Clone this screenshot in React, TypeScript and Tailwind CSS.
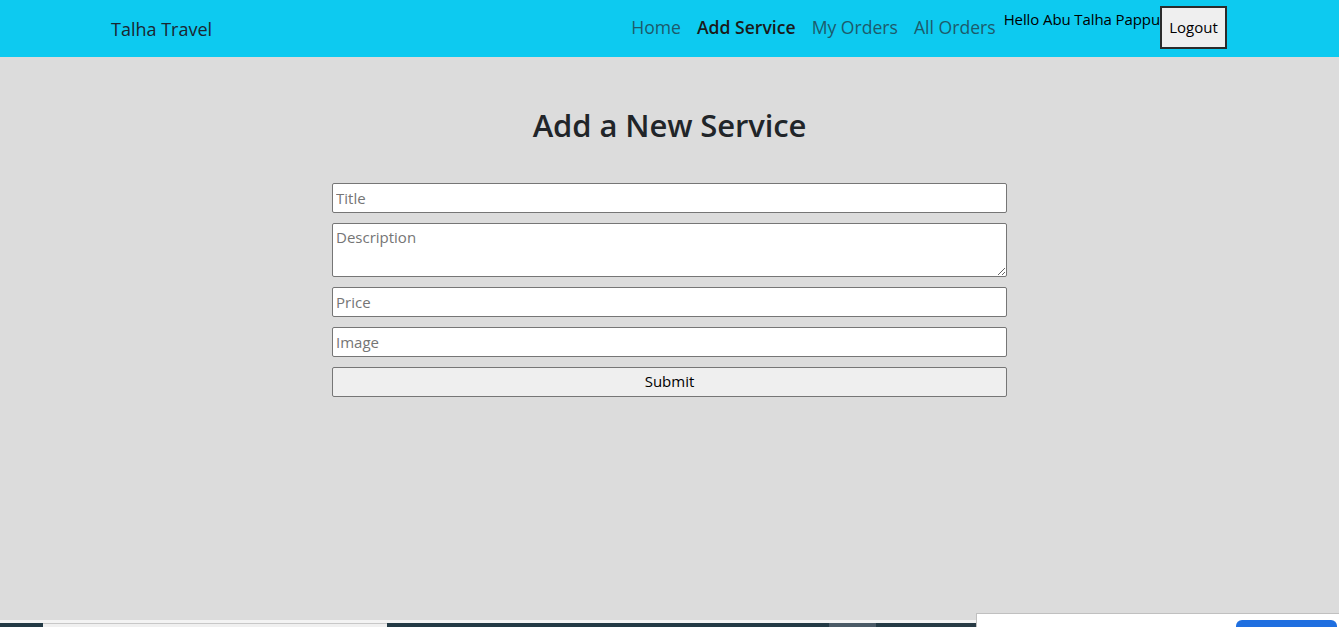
const NavLink = ({ label, active }: { label: string; active?: boolean }) => {
  return (
    <a
      href="#"
      className={
        "px-2 text-[17.6px] " + (active ? "text-[#1a1a1a] font-semibold" : "text-[#1d5a6b]")
      }
    >
      {label}
    </a>
  );
};

const Field = ({ placeholder }: { placeholder: string }) => {
  return (
    <input
      placeholder={placeholder}
      className="h-[30px] w-full bg-white border border-[#767676] rounded-[2px] px-[3px] text-[15px] text-black placeholder:text-[#757575] outline-none"
    />
  );
};

export default function App() {
  return (
    <div
      className="relative h-[627px] w-full flex flex-col bg-[#dcdcdc] overflow-hidden"
      style={{ fontFamily: '"Open Sans", "Noto Sans", sans-serif' }}
    >
      <nav className="h-[57px] shrink-0 bg-[#0dcaf0] flex items-center justify-between pl-[111px] pr-[112px]">
        <a href="#" className="text-[18px] text-[#1b2630] mt-[1px]">
          Talha Travel
        </a>
        <div className="flex items-center h-full">
          <div className="flex items-center -mr-2 -mt-[2px]">
            <NavLink label="Home" />
            <NavLink label="Add Service" active />
            <NavLink label="My Orders" />
            <NavLink label="All Orders" />
          </div>
          <span className="self-start mt-[8px] ml-2 text-[15px] text-black tracking-[-0.1px]">
            Hello Abu Talha Pappu
          </span>
          <button className="h-[43px] w-[67px] -mt-[2px] bg-[#efefef] border-2 border-[#2b2b2b] text-[15px] text-black">
            Logout
          </button>
        </div>
      </nav>

      <main className="flex-1 flex flex-col items-center">
        <h2 className="mt-[45px] text-[31px] font-semibold text-[#212529] tracking-[-0.1px]">
          Add a New Service
        </h2>
        <form className="mt-[34px] w-[675px] flex flex-col gap-[10px]">
          <Field placeholder="Title" />
          <textarea
            placeholder="Description"
            className="h-[54px] w-full bg-white border border-[#767676] rounded-[2px] px-[3px] py-[2px] text-[15px] text-black placeholder:text-[#757575] outline-none"
          />
          <Field placeholder="Price" />
          <Field placeholder="Image" />
          <button
            type="button"
            className="h-[30px] w-full bg-[#efefef] border border-[#767676] rounded-[2px] text-[15px] text-black"
          >
            Submit
          </button>
        </form>
      </main>

      <div className="h-[3px] shrink-0 bg-[#f3f3f3]" />
      <div className="h-[4px] shrink-0 flex bg-[#233a45]">
        <div className="w-[43px]" />
        <div className="w-[344px] bg-[#f0f0f0] border-t border-[#c8c8c8]" />
        <div className="w-[442px]" />
        <div className="w-[47px] bg-[#4a5a66]" />
        <div className="flex-1 bg-gradient-to-r from-[#233a45] to-[#3b3f45]" />
      </div>

      <div className="absolute right-0 bottom-0 w-[363px] h-[14px] bg-white border-t border-l border-[#c0c0c0]">
        <div className="absolute right-[2px] top-[6px] w-[101px] h-[10px] rounded-t-[6px] bg-[#1f6fe0]" />
      </div>
    </div>
  );
}
